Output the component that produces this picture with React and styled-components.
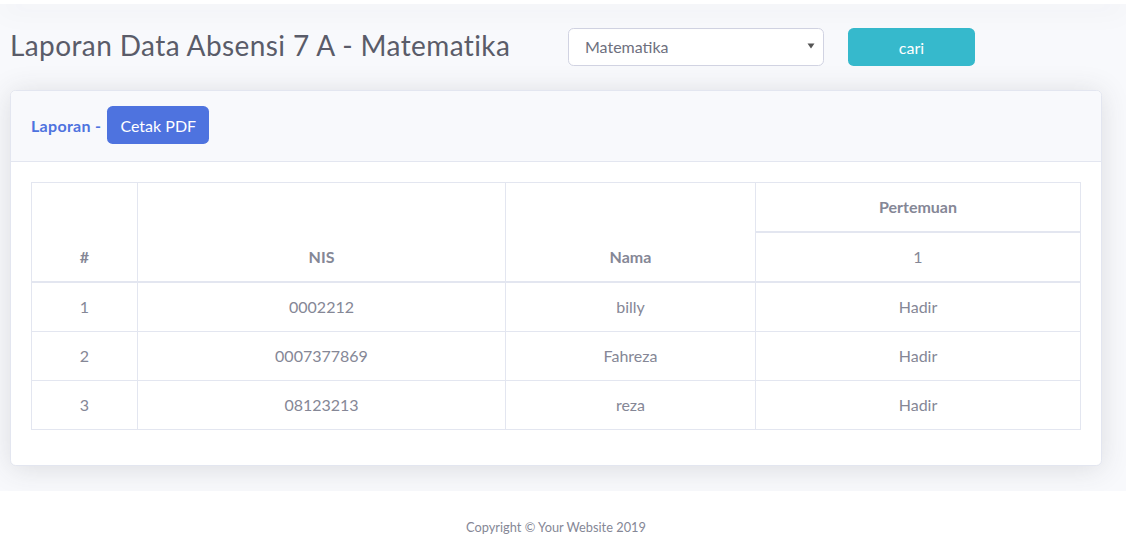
import React from 'react';
import styled, { createGlobalStyle } from 'styled-components';

const GlobalStyle = createGlobalStyle`
    body {
        margin: 0;
        background: #fff;
        font-family: Lato, 'Open Sans', sans-serif;
        color: #858796;
    }
`;

const TopEdge = styled.div`
    height: 4px;
    background: #fff;
    box-shadow: 0 0.15rem 1.75rem 0 rgba(58, 59, 69, 0.15);
    position: relative;
    z-index: 1;
`;

const Content = styled.div`
    background: #f8f9fc;
    padding: 24px 24px 25px 10px;
`;

const HeadRow = styled.div`
    display: flex;
    align-items: center;
    height: 38px;
    margin-bottom: 24px;
`;

const Title = styled.h3`
    margin: 0 0 2px;
    width: 558px;
    flex: none;
    font-size: 28px;
    font-weight: 400;
    letter-spacing: 0.4px;
    color: #5a5c69;
    line-height: 1.2;
`;

const SelectBox = styled.div`
    box-sizing: border-box;
    width: 256px;
    height: 38px;
    display: flex;
    align-items: center;
    justify-content: space-between;
    padding: 0 8px 2px 16px;
    background: #fff;
    border: 1px solid #d1d3e2;
    border-radius: 5.6px;
    font-size: 16px;
    color: #6e707e;
`;

const Button = styled.button`
    box-sizing: border-box;
    height: 38px;
    padding: 0 12px;
    border: 0;
    border-radius: 5.6px;
    font-family: inherit;
    font-size: 16px;
    color: #fff;
    background: ${(p) => p.$bg};
    width: ${(p) => p.$width || 'auto'};
    margin-left: ${(p) => p.$ml || '0'};
`;

const Card = styled.div`
    background: #fff;
    border: 1px solid #e3e6f0;
    border-radius: 5.6px;
    box-shadow: 0 0.15rem 1.75rem 0 rgba(58, 59, 69, 0.15);
    overflow: hidden;
`;

const CardHeader = styled.div`
    display: flex;
    align-items: center;
    gap: 6px;
    padding: 15px 20px 17px;
    background: #f8f9fc;
    border-bottom: 1px solid #e3e6f0;
`;

const HeaderLabel = styled.span`
    font-weight: 700;
    font-size: 16px;
    letter-spacing: 0.3px;
    color: #4e73df;
`;

const CardBody = styled.div`
    padding: 20px 20px 35px;
`;

const Table = styled.table`
    width: 100%;
    border-collapse: collapse;
    font-size: 16px;
    line-height: 24px;
    color: #858796;
    border: 1px solid #e3e6f0;
`;

const Th = styled.th`
    border: 1px solid #e3e6f0;
    border-bottom-width: ${(p) => (p.$thick ? '2px' : '1px')};
    padding: 12px;
    text-align: center;
    vertical-align: bottom;
    font-weight: ${(p) => (p.$plain ? 400 : 700)};
    width: ${(p) => p.$w || 'auto'};
`;

const Td = styled.td`
    border: 1px solid #e3e6f0;
    padding: 12px;
    text-align: center;
`;

const Footer = styled.footer`
    background: #fff;
    padding: 28px 14px 20px 0;
    text-align: center;
    font-size: 12.8px;
    color: #858796;
`;

const rows = [
    { no: 1, nis: '0002212', nama: 'billy', status: 'Hadir' },
    { no: 2, nis: '0007377869', nama: 'Fahreza', status: 'Hadir' },
    { no: 3, nis: '08123213', nama: 'reza', status: 'Hadir' },
];

const App = () => {
    return (
        <>
            <GlobalStyle />
            <TopEdge />
            <Content>
                <HeadRow>
                    <Title>Laporan Data Absensi 7 A - Matematika</Title>
                    <SelectBox>
                        <span>Matematika</span>
                        <svg width="8" height="6" viewBox="0 0 8 6">
                            <path d="M0.5 0.5h7L4 5.5z" fill="#555" />
                        </svg>
                    </SelectBox>
                    <Button $bg="#36b9cc" $width="127px" $ml="24px">
                        cari
                    </Button>
                </HeadRow>
                <Card>
                    <CardHeader>
                        <HeaderLabel>Laporan -</HeaderLabel>
                        <Button $bg="#4e73df" $width="102px">
                            Cetak PDF
                        </Button>
                    </CardHeader>
                    <CardBody>
                        <Table>
                            <thead>
                                <tr>
                                    <Th rowSpan={2} $thick $w="81px">#</Th>
                                    <Th rowSpan={2} $thick $w="343px">NIS</Th>
                                    <Th rowSpan={2} $thick $w="225px">Nama</Th>
                                    <Th $thick>Pertemuan</Th>
                                </tr>
                                <tr>
                                    <Th $plain $thick>1</Th>
                                </tr>
                            </thead>
                            <tbody>
                                {rows.map((r) => (
                                    <tr key={r.no}>
                                        <Td>{r.no}</Td>
                                        <Td>{r.nis}</Td>
                                        <Td>{r.nama}</Td>
                                        <Td>{r.status}</Td>
                                    </tr>
                                ))}
                            </tbody>
                        </Table>
                    </CardBody>
                </Card>
            </Content>
            <Footer>Copyright © Your Website 2019</Footer>
        </>
    );
};

export default App;
